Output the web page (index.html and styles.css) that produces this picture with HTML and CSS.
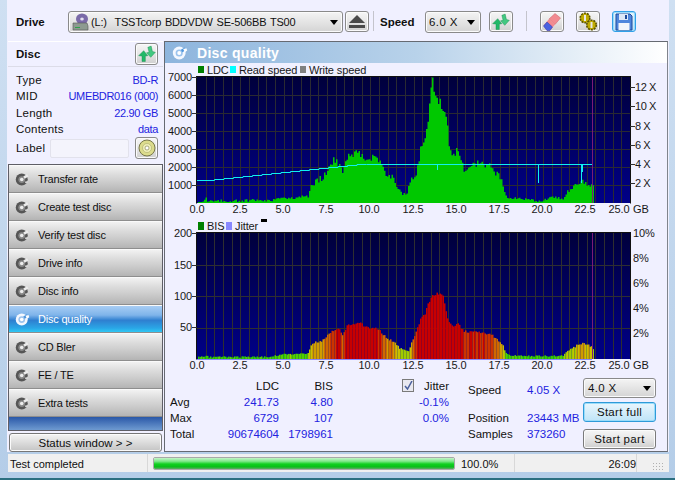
FILE: index.html
```html
<!DOCTYPE html>
<html lang="en">
<head>
<meta charset="utf-8">
<title>Disc quality</title>
<link rel="stylesheet" href="styles.css">
</head>
<body>
<svg class="defs" width="0" height="0" aria-hidden="true">
  <defs>
    <symbol id="i-refresh" viewBox="0 0 24 24">
      <path fill="#22b868" stroke="#12884a" stroke-width=".5" d="M2 14l6-6 5 6-3 .5V21H6v-6.500z"/>
      <path fill="#42c880" stroke="#12884a" stroke-width=".5" d="M22 10l-5.500 6-5-5.500 3-.5L13 4l4-1.500L18.500 9z"/>
    </symbol>
    <symbol id="i-disc" viewBox="0 0 20 20">
      <circle cx="9" cy="10" r="8" fill="#565656"/>
      <circle cx="9" cy="10" r="4.500" fill="#8a8a8a"/>
      <circle cx="9" cy="10" r="2.400" fill="#ececec"/>
      <path d="M11 6l5-3 2 3-5 3z" fill="#ececec"/>
      <path d="M13 13l4-1 1 2-4 1z" fill="#d8d8d8"/>
    </symbol>
    <symbol id="i-disc-w" viewBox="0 0 20 20">
      <circle cx="9" cy="10" r="8" fill="#f4f8ff"/>
      <circle cx="9" cy="10" r="4.500" fill="#9cc4ee"/>
      <circle cx="9" cy="10" r="2.400" fill="#fff"/>
      <path d="M11 6l5-3 2 3-5 3z" fill="#4f96dc"/>
      <path d="M14 5l4-1 1 3-3 2z" fill="#fff"/>
    </symbol>
  </defs>
</svg>
<div class="window">
  <header class="topbar">
    <span class="tb-label drive-label">Drive</span>
    <div class="combo drive-combo">
      <svg class="drive-icon" width="18" height="18" viewBox="0 0 18 18">
        <ellipse cx="10" cy="6" rx="6" ry="5.500" fill="#7a6aa8"/>
        <ellipse cx="10" cy="6" rx="1.800" ry="1.600" fill="#e4e0f0"/>
        <path d="M1 10h14l1 3v4H1z" fill="#8d9a90" stroke="#555" stroke-width=".6"/>
        <path d="M3 14h5v1H3z" fill="#2da04a"/>
      </svg>
      <span class="drive-name">(L:)&nbsp;&nbsp;TSSTcorp BDDVDW SE-506BB TS00</span>
      <span class="caret"></span>
    </div>
    <button class="tool eject" type="button" aria-label="Eject">
      <svg width="16" height="13" viewBox="0 0 16 13"><path d="M8 0l8 8H0z" fill="#4a4a4a"/><path d="M0 10h16v3H0z" fill="#4a4a4a"/></svg>
    </button>
    <span class="tb-sep sep-a"></span>
    <span class="tb-label speed-label">Speed</span>
    <div class="combo speed-combo"><span>6.0 X</span><span class="caret"></span></div>
    <button class="tool refresh" type="button" aria-label="Refresh"><svg width="20" height="20"><use href="#i-refresh"/></svg></button>
    <span class="tb-sep sep-b"></span>
    <button class="tool erase" type="button" aria-label="Erase">
      <svg width="20" height="20" viewBox="0 0 20 20"><path d="M7 7l6-5.500 5.500 4.500-5.500 6.500z" fill="#f28a90" stroke="#c85c64" stroke-width=".5"/><path d="M1.500 13.500L7 7l6 5.500-5 6H5z" fill="#f28a90"/><path d="M1.500 14l3.500-4 5.500 5-2.500 3.500H5z" fill="#4a62e0" stroke="#2a3ab0" stroke-width=".5"/></svg>
    </button>
    <button class="tool gears" type="button" aria-label="Settings">
      <svg width="20" height="20" viewBox="0 0 20 20"><circle cx="7" cy="6" r="4.800" fill="#c0ac00" stroke="#5c5400" stroke-width="1.600" stroke-dasharray="2 1"/><path d="M6 3h2v6H6z" fill="#e8e8e8"/><circle cx="13.500" cy="13" r="4.800" fill="#c0ac00" stroke="#5c5400" stroke-width="1.600" stroke-dasharray="2 1"/><path d="M12.500 10h2v6h-2z" fill="#e8e8e8"/></svg>
    </button>
    <button class="tool save" type="button" aria-label="Save">
      <svg width="18" height="18" viewBox="0 0 18 18"><path d="M1 1h14l2 2v14H1z" fill="#4f86dc" stroke="#1e4a9c"/><path d="M4 1h9v6H4z" fill="#dfe8f6"/><path d="M10 2h2v4h-2z" fill="#1e4a9c"/><path d="M3.500 10h11v7h-11z" fill="#f2f5fb"/></svg>
    </button>
  </header>

  <div class="body">
    <aside class="side">
      <section class="disc">
        <div class="disc-head">
          <span class="disc-title">Disc</span>
          <button class="tool small" type="button" aria-label="Refresh disc"><svg width="20" height="20"><use href="#i-refresh"/></svg></button>
        </div>
        <dl class="disc-rows">
          <div class="row"><dt>Type</dt><dd>BD-R</dd></div>
          <div class="row"><dt>MID</dt><dd>UMEBDR016 (000)</dd></div>
          <div class="row"><dt>Length</dt><dd>22.90 GB</dd></div>
          <div class="row"><dt>Contents</dt><dd>data</dd></div>
        </dl>
        <div class="label-row">
          <span class="label-text">Label</span>
          <span class="label-input"></span>
          <button class="tool small" type="button" aria-label="Disc label">
            <svg width="18" height="18" viewBox="0 0 18 18"><circle cx="9" cy="9" r="8" fill="#dcdc8c" stroke="#77774a"/><circle cx="9" cy="9" r="4.500" fill="#f0f0b8" stroke="#a8a868" stroke-width=".6"/><circle cx="9" cy="9" r="2" fill="#fff" stroke="#77774a" stroke-width=".6"/></svg>
          </button>
        </div>
      </section>

      <nav class="nav">
        <a class="nav-item"><svg width="15" height="15"><use href="#i-disc"/></svg><span>Transfer rate</span></a>
        <a class="nav-item"><svg width="15" height="15"><use href="#i-disc"/></svg><span>Create test disc</span></a>
        <a class="nav-item"><svg width="15" height="15"><use href="#i-disc"/></svg><span>Verify test disc</span></a>
        <a class="nav-item"><svg width="15" height="15"><use href="#i-disc"/></svg><span>Drive info</span></a>
        <a class="nav-item"><svg width="15" height="15"><use href="#i-disc"/></svg><span>Disc info</span></a>
        <a class="nav-item active"><svg width="15" height="15"><use href="#i-disc-w"/></svg><span>Disc quality</span></a>
        <a class="nav-item"><svg width="15" height="15"><use href="#i-disc"/></svg><span>CD Bler</span></a>
        <a class="nav-item"><svg width="15" height="15"><use href="#i-disc"/></svg><span>FE / TE</span></a>
        <a class="nav-item"><svg width="15" height="15"><use href="#i-disc"/></svg><span>Extra tests</span></a>
        <div class="nav-foot"></div>
      </nav>
      <button class="status-btn" type="button">Status window &gt; &gt;</button>
    </aside>

    <main class="panel">
      <div class="panel-title">
        <svg width="16" height="16"><use href="#i-disc-w"/></svg>
        <span>Disc quality</span>
      </div>

      <svg id="chart1" class="chart" width="502" height="156" viewBox="165 63 502 156">
        <rect x="198" y="66" width="6" height="7" fill="#008000"/><text x="207" y="74">LDC</text>
        <rect x="230" y="66" width="6" height="7" fill="#00ffff"/><text x="239" y="74">Read speed</text>
        <rect x="300" y="66" width="6" height="7" fill="#808080"/><text x="309" y="74">Write speed</text>
        <g id="plot1"></g>
        <g class="end">
          <text x="192" y="81">7000</text><text x="192" y="99">6000</text><text x="192" y="117">5000</text><text x="192" y="135">4000</text><text x="192" y="153">3000</text><text x="192" y="171">2000</text><text x="192" y="189">1000</text>
        </g>
        <g class="tight">
          <text x="635" y="91">12 X</text><text x="635" y="110">10 X</text><text x="635" y="130">8 X</text><text x="635" y="149">6 X</text><text x="635" y="168">4 X</text><text x="635" y="187">2 X</text>
        </g>
        <g class="mid">
          <text x="197" y="213">0.0</text><text x="240" y="213">2.5</text><text x="283" y="213">5.0</text><text x="326" y="213">7.5</text><text x="369" y="213">10.0</text><text x="413" y="213">12.5</text><text x="456" y="213">15.0</text><text x="499" y="213">17.5</text><text x="542" y="213">20.0</text><text x="585" y="213">22.5</text><text x="619" y="213">25.0</text>
        </g>
        <text x="633" y="213">GB</text>
      </svg>

      <svg id="chart2" class="chart" width="502" height="156" viewBox="165 219 502 156">
        <rect x="198" y="222" width="6" height="8" fill="#008000"/><text x="207" y="230">BIS</text>
        <rect x="226" y="222" width="6" height="8" fill="#8888ff"/><text x="235" y="230">Jitter</text>
        <rect x="261" y="219" width="6" height="3" fill="#000"/>
        <g id="plot2"></g>
        <g class="end">
          <text x="192" y="237">200</text><text x="192" y="269">150</text><text x="192" y="300">100</text><text x="192" y="331">50</text>
        </g>
        <text x="633" y="237">10%</text><text x="633" y="262">8%</text><text x="633" y="287">6%</text><text x="633" y="312">4%</text><text x="633" y="337">2%</text>
        <g class="mid">
          <text x="197" y="369">0.0</text><text x="240" y="369">2.5</text><text x="283" y="369">5.0</text><text x="326" y="369">7.5</text><text x="369" y="369">10.0</text><text x="413" y="369">12.5</text><text x="456" y="369">15.0</text><text x="499" y="369">17.5</text><text x="542" y="369">20.0</text><text x="585" y="369">22.5</text><text x="619" y="369">25.0</text>
        </g>
        <text x="633" y="369">GB</text>
      </svg>

      <div class="stats">
        <div class="tbl">
          <span></span><span class="th">LDC</span><span class="th">BIS</span>
          <span>Avg</span><b>241.73</b><b>4.80</b>
          <span>Max</span><b>6729</b><b>107</b>
          <span>Total</span><b>90674604</b><b>1798961</b>
        </div>
        <div class="jitter">
          <div class="jitter-head">
            <span class="check"><svg width="9" height="9" viewBox="0 0 9 9"><path d="M1 5l2.500 3L8 0" fill="none" stroke="#4a5f9c" stroke-width="1.500"/></svg></span>
            <span>Jitter</span>
          </div>
          <b>-0.1%</b>
          <b>0.0%</b>
        </div>
        <div class="info">
          <span class="info-speed">Speed</span><b class="info-speed">4.05 X</b>
          <span>Position</span><b>23443 MB</b>
          <span>Samples</span><b>373260</b>
        </div>
        <div class="actions">
          <div class="combo action-combo"><span>4.0 X</span><span class="caret"></span></div>
          <button class="act primary" type="button">Start full</button>
          <button class="act" type="button">Start part</button>
        </div>
      </div>
    </main>
  </div>

  <footer class="statusbar">
    <span class="st-msg">Test completed</span>
    <span class="st-prog"><span class="st-fill"></span></span>
    <span class="st-pct">100.0%</span>
    <span class="st-time">26:09</span>
    <span class="st-grip"></span>
  </footer>
</div>
<script src="charts.js"></script>
</body>
</html>
```
FILE: styles.css
```css
* { box-sizing: border-box; }
html, body { margin: 0; padding: 0; }
body {
  width: 675px; height: 480px; overflow: hidden;
  font-family: "Liberation Sans", Arial, sans-serif;
  font-size: 11px; color: #101010;
  background: #b9d1ea;
}
.defs { position: absolute; }
.window {
  width: 675px; height: 480px;
  padding: 0 7px 0 7px;
  background: linear-gradient(#cfe0f2, #b4cde8);
  border-bottom: 2px solid #2b6f80;
  display: flex; flex-direction: column;
}
.topbar {
  height: 41px; flex: none;
  margin: 0 -1px 0 0;
  background: #f0f0ff;
  display: flex; align-items: flex-start;
  padding-top: 11px;
}
.tb-label { font-weight: bold; font-size: 11.5px; line-height: 22px; }
.drive-label { margin-left: 9px; width: 52px; }
.combo {
  display: flex; align-items: center;
  height: 22px;
  border: 1px solid #8a8a8a; border-radius: 3px;
  background: linear-gradient(#f4f4f4, #e6e6e6 45%, #d4d4d4);
  box-shadow: inset 0 0 0 1px #fbfbfb;
  position: relative;
}
.caret {
  width: 0; height: 0;
  border: 4px solid transparent; border-top: 5px solid #000; border-bottom: 0;
  margin-left: auto;
}
.drive-combo { width: 275px; padding: 0 4px 0 3px; }
.drive-icon { flex: none; }
.drive-name { margin-left: 1px; font-size: 11px; letter-spacing: -.2px; word-spacing: 1px; white-space: nowrap; }
.tool {
  flex: none; width: 24px; height: 21px; padding: 0;
  display: flex; align-items: center; justify-content: center;
  border: 1px solid #8a8a8a; border-radius: 3px;
  background: linear-gradient(#f6f6f6, #e8e8e8 45%, #cfcfcf);
  box-shadow: inset 0 0 0 1px #fbfbfb;
}
.eject { margin-left: 2px; }
.tb-sep { flex: none; width: 1px; height: 20px; background: #c4c4cc; }
.sep-a { margin-left: 4px; }
.speed-label { margin-left: 6px; width: 45px; }
.speed-combo { width: 56px; padding: 0 5px 0 3px; font-size: 11.5px; letter-spacing: .4px; }
.refresh { margin-left: 8px; }
.sep-b { margin-left: 13px; }
.erase { margin-left: 13px; }
.gears { margin-left: 12px; }
.save {
  margin-left: 12px;
  border-color: #30a0e8;
  box-shadow: inset 0 0 0 1px #9adcfa;
  background: linear-gradient(#e6f4fc, #bde4f8);
}

.body { flex: 1; display: flex; min-height: 0; margin-right: -1px; background: #f0f0ff; }
.side { width: 157px; flex: none; padding-left: 1px; display: flex; flex-direction: column; }
.disc { height: 122px; width: 155px; border-top: 1px solid #fff; flex: none; }
.disc-head {
  height: 25px; display: flex; align-items: center; justify-content: space-between;
  padding: 0 5px 0 8px; border-bottom: 1px solid #dcdce8;
}
.disc-title { font-weight: bold; font-size: 11.5px; }
.small { width: 23px; height: 22px; }
.disc-rows { margin: 0; padding: 5px 5px 0 8px; }
.row { display: flex; justify-content: space-between; height: 16.3px; line-height: 16px; }
.row dt { font-size: 11.5px; letter-spacing: .2px; }
.row dd { margin: 0; color: #2222e0; font-size: 11px; letter-spacing: -.35px; }
.label-row { display: flex; align-items: center; padding: 0 5px 0 8px; font-size: 11.5px; }
.label-text { width: 34px; letter-spacing: .2px; }
.label-input { width: 79px; height: 19px; background: #f4f4fc; border: 1px solid #e2e2ec; border-radius: 2px; margin-right: 6px; }

.nav { width: 155px; height: 267px; flex: none; border: 1px solid #5e5e66; background: #f0f0ff; margin-top: 1px; display: flex; flex-direction: column; }
.nav-item {
  height: 28px; flex: none;
  display: flex; align-items: center; padding-left: 6px; gap: 8px;
  font-size: 11px; letter-spacing: -.2px; color: #101010;
  background: linear-gradient(#f2f2f2, #dedede 30%, #cdcdcd 60%, #b4b4b4);
  border-bottom: 1px solid #8e8e8e; border-top: 1px solid #fafafa;
}
.nav-item.active {
  color: #fff;
  background: linear-gradient(#a8cdf4, #7fb4ea 35%, #2f7fd0 55%, #2aa6e6 85%, #30c8f4);
}
.nav-foot { flex: 1; background: linear-gradient(#2a58a8, #6e9ad0); }
.status-btn {
  margin: 2px 0 0 1px; width: 153px; height: 19px; padding: 0; flex: none;
  font: 11.5px "Liberation Sans", Arial, sans-serif; letter-spacing: 0; color: #101010;
  border: 1px solid #777; border-radius: 3px;
  background: linear-gradient(#f4f4f4, #dcdcdc 50%, #c4c4c4);
  box-shadow: inset 0 0 0 1px #fbfbfb;
}

.panel {
  flex: 1; min-width: 0; height: 411px;
  border: 1px solid #666a72; border-right-color: #80848c;
  margin-right: 1px;
  display: flex; flex-direction: column;
}
.panel-title {
  height: 21px; flex: none;
  display: flex; align-items: center; gap: 9px; padding-left: 7px;
  background: linear-gradient(90deg, #8db5dd, #b8d2ea 50%, #ffffff);
  color: #fff; font-weight: bold; font-size: 14px; letter-spacing: .3px;
}
.chart { display: block; flex: none; }
.chart text { font-family: "Liberation Sans", Arial, sans-serif; font-size: 11px; fill: #181818; letter-spacing: -.12px; }
.chart .end text { text-anchor: end; }
.chart .mid text { text-anchor: middle; }
.chart .tight text { letter-spacing: -.4px; }

.stats { flex: 1; position: relative; display: flex; min-height: 0; }
.stats b { font-weight: normal; color: #2222e0; }
.tbl {
  width: 169px; margin-left: 5px; padding-top: 3px;
  display: grid; grid-template-columns: 46px 63px 54px; grid-auto-rows: 16.1px;
  line-height: 16px; font-size: 11.5px;
}
.tbl > b, .tbl > .th { text-align: right; }
.jitter {
  width: 47px; margin-left: 63px; padding-top: 3px;
  display: grid; grid-auto-rows: 16.1px; line-height: 16px; text-align: right; font-size: 11.5px;
}
.jitter-head { display: flex; justify-content: space-between; align-items: center; }
.check {
  width: 12px; height: 13px; display: flex; align-items: center; justify-content: center;
  border: 1px solid #7a7a7a; background: #e8e8f0; margin-top: -2px;
}
.info {
  width: 115px; margin-left: 19px; padding-top: 7px;
  display: grid; grid-template-columns: 59px 1fr; grid-auto-rows: 16px;
  line-height: 16px; font-size: 11.5px; letter-spacing: 0;
}
.info-speed { margin-bottom: 12px; height: 28px; }
.info > :nth-child(3), .info > :nth-child(4) { margin-top: 12px; }
.info > :nth-child(5), .info > :nth-child(6) { margin-top: 12px; }
.actions { width: 74px; padding-top: 3px; display: flex; flex-direction: column; }
.action-combo { width: 73px; height: 20px; padding: 0 4px; font-size: 11.5px; letter-spacing: .3px; }
.act {
  width: 73px; height: 20px; padding: 0; margin-top: 4px;
  font: 11.5px "Liberation Sans", Arial, sans-serif; letter-spacing: .3px; color: #101010;
  border: 1px solid #7a7a7a; border-radius: 3px;
  background: linear-gradient(#f6f6f6, #e8e8e8 45%, #cfcfcf);
  box-shadow: inset 0 0 0 1px #fbfbfb;
}
.act.primary {
  border-color: #2f9ad8;
  background: linear-gradient(#eaf6fd, #bfe4f8);
  box-shadow: inset 0 0 0 1px #9adcfa;
}
.act + .act { margin-top: 7px; }

.statusbar {
  height: 18px; flex: none;
  margin: 2px 0 6px 1px; width: 661px;
  background: #f0f0f0; display: flex; align-items: center;
  font-size: 11px;
}
.st-msg { width: 140px; padding-left: 2px; border-right: 1px solid #d8d8d8; height: 18px; line-height: 20px; }
.st-prog {
  width: 302px; height: 13px; margin-left: 5px;
  border: 1px solid #a8a8a8; border-radius: 2px; overflow: hidden; display: block;
}
.st-fill { display: block; height: 100%; background: linear-gradient(#c4f4c8, #7ee88a 30%, #10d020 55%, #08c018 80%, #60a868); }
.st-pct { width: 60px; padding-left: 6px; border-right: 1px solid #d8d8d8; height: 18px; line-height: 20px; }
.st-time { width: 122px; text-align: right; padding-right: 0; border-right: 1px solid #d8d8d8; height: 18px; line-height: 20px; }
.st-grip {
  width: 12px; height: 10px; margin: 8px 0 0 15px;
  background: radial-gradient(circle, #b0b0b0 1px, transparent 1px) 0 0 / 3px 3px;
}
```
FILE: charts.js
```js
(function () {
  var NS = 'http://www.w3.org/2000/svg';
  var seed = 12345;
  function rnd() { seed = (seed * 1103515 + 12345) % 2147483647; return seed / 2147483647; }
  function el(parent, name, attrs) {
    var n = document.createElementNS(NS, name);
    for (var k in attrs) n.setAttribute(k, attrs[k]);
    parent.appendChild(n);
    return n;
  }
  function envelope(points, x) {
    for (var i = 1; i < points.length; i++) {
      if (x <= points[i][0]) {
        var a = points[i - 1], b = points[i];
        return a[1] + (b[1] - a[1]) * (x - a[0]) / (b[0] - a[0]);
      }
    }
    return points[points.length - 1][1];
  }
  var L = 197, R = 630, END = 593;

  function frame(g, top, bottom, hStep, gridColor, id) {
    var gradId = 'bg' + id;
    var defs = el(g, 'defs', {});
    var grad = el(defs, 'linearGradient', { id: gradId, x1: 0, y1: 0, x2: 0, y2: 1 });
    el(grad, 'stop', { offset: '0', 'stop-color': '#00003c' });
    el(grad, 'stop', { offset: '1', 'stop-color': '#000088' });
    el(g, 'rect', { x: L, y: top, width: R - L, height: bottom - top, fill: 'url(#' + gradId + ')' });
    for (var i = 1; i < 50; i++) {
      var x = Math.round(L + i * 8.66) + 0.5;
      el(g, 'path', { d: 'M' + x + ' ' + top + 'V' + bottom, stroke: gridColor, fill: 'none' });
    }
    for (var y = top + hStep; y < bottom - 1; y += hStep) {
      var yy = Math.round(y) + 0.5;
      el(g, 'path', { d: 'M' + L + ' ' + yy + 'H' + R, stroke: gridColor, fill: 'none' });
    }
  }
  function border(g, top, bottom, ticksL, ticksR) {
    el(g, 'path', { d: 'M196.5 ' + (top - 1) + 'V' + (bottom + 0.5) + 'M196 ' + (top - 0.5) + 'H631', stroke: '#101010', fill: 'none' });
    el(g, 'path', { d: 'M630.5 ' + (top - 1) + 'V' + (bottom + 0.5), stroke: '#101010', fill: 'none' });
    ticksL.forEach(function (y) { el(g, 'path', { d: 'M192 ' + (y + 0.5) + 'H197', stroke: '#303030' }); });
    ticksR.forEach(function (y) { el(g, 'path', { d: 'M630 ' + (y + 0.5) + 'H635', stroke: '#303030' }); });
    el(g, 'path', { d: 'M592.5 ' + top + 'V' + bottom, stroke: '#7a1a78', fill: 'none' });
  }

  /* Top chart: LDC and read speed */
  var ldc = [[197,1],[203,2],[205,7],[207,2],[240,2],[252,3],[270,2],[282,5],[285,4],[298,6],[308,7],[310,15],[315,22],[322,25],[325,30],[328,37],[335,44],[338,38],[342,30],[347,45],[357,52],[365,45],[372,45],[378,42],[385,30],[392,25],[398,15],[403,9],[407,10],[410,25],[415,28],[420,53],[425,64],[427,78],[430,112],[432,121],[433,110],[435,105],[440,100],[443,92],[447,80],[448,55],[453,48],[456,53],[458,48],[463,35],[468,32],[473,40],[480,38],[487,39],[493,33],[500,25],[503,15],[507,4],[517,5],[527,3],[540,2],[552,6],[562,4],[567,11],[575,17],[583,22],[592,17],[593,17]];
  var p1 = document.getElementById('plot1');
  frame(p1, 77, 203, 18, '#2a2a32', 1);
  var d = '', x, h;
  for (x = L + 1; x < END; x += 1.5) {
    h = envelope(ldc, x);
    h = Math.max(1, h + (rnd() - 0.5) * (h < 10 ? 3 : 5 + h * 0.06));
    d += 'M' + x + ' 203h1.5v-' + h.toFixed(1) + 'h-1.5z';
  }
  el(p1, 'path', { d: d, fill: '#00c800' });
  var speed = 'M197 180.500';
  var sy = 180.5;
  for (x = 205; x <= 385; x += 9.5) { sy = Math.max(163.5, sy - 0.95); speed += 'H' + x + 'V' + (Math.round(sy) + 0.5); }
  speed += 'H592';
  el(p1, 'path', { d: speed + 'M437.500 164V170M538.500 164V183M581.500 164V183M582.500 164V172', stroke: '#10f0f0', fill: 'none' });
  border(p1, 77, 203, [77, 95, 113, 131, 149, 167, 185], [87, 106, 126, 145, 164, 183]);

  /* Lower chart: BIS */
  var bis = [[197,2],[205,2],[206,4],[208,2],[270,2],[282,5],[285,5],[298,5],[308,6],[310,12],[315,17],[322,18],[328,25],[338,31],[342,24],[347,34],[358,37],[365,32],[378,30],[385,22],[395,15],[400,10],[408,9],[413,20],[420,40],[425,46],[427,55],[432,63],[437,66],[443,62],[447,40],[452,32],[457,36],[463,28],[470,27],[480,27],[490,25],[500,17],[505,8],[508,4],[520,3],[563,3],[567,9],[575,13],[583,16],[592,11],[593,11]];
  function bisColor(h, r) {
    var v = h + (r - 0.5) * 5;
    if (v < 6) return v < 3.5 ? '#30cc00' : '#50d000';
    if (v < 10) return '#a0cc00';
    if (v < 14) return '#c8c000';
    if (v < 19) return '#d09c00';
    if (v < 24) return '#d06800';
    if (v < 28) return '#cc3400';
    return '#c80000';
  }
  var p2 = document.getElementById('plot2');
  frame(p2, 233, 359, 31.5, '#2e2e30', 2);
  for (x = L + 1; x < END; x += 1.5) {
    h = envelope(bis, x);
    h = Math.max(1, h + (rnd() - 0.5) * (h < 6 ? 1.5 : 2.5));
    el(p2, 'rect', { x: x, y: (359 - h).toFixed(1), width: 1.5, height: h.toFixed(1), fill: bisColor(h, rnd()) });
  }
  el(p2, 'path', { d: 'M197 359.500H592', stroke: '#8888ff', fill: 'none' });
  border(p2, 233, 359, [233, 265, 296, 327], []);
})();
```
